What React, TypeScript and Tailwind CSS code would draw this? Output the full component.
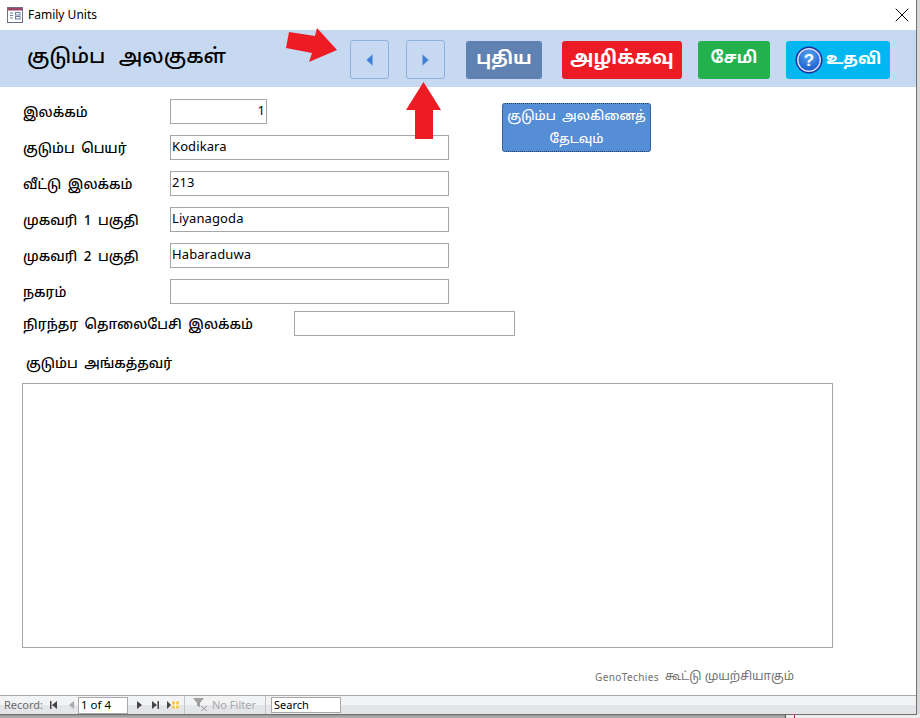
import { X } from "lucide-react";

const tamil = "font-['Noto_Sans_Tamil','Latha','Noto_Sans','DejaVu_Sans',sans-serif]";

// Access form icon in the title bar
function FormIcon() {
  return (
    <svg width="16" height="16" viewBox="0 0 16 16" className="shrink-0">
      <rect x="0.5" y="0.5" width="15" height="15" fill="#fff" stroke="#6d6d8e" />
      <rect x="1" y="1" width="14" height="2.5" fill="#a0456a" />
      <path d="M3 6h3M3 8.5h3M3 11h3" stroke="#6d7fa5" />
      <rect x="8.500" y="5.500" width="4.500" height="2.500" fill="#fff" stroke="#6d7fa5" />
      <rect x="8.500" y="9.500" width="4.500" height="2.500" fill="#fff" stroke="#6d7fa5" />
    </svg>
  );
}

function NavButton({ dir }: { dir: "prev" | "next" }) {
  return (
    <div className="flex h-[39px] w-[39px] items-center justify-center rounded-[3px] border border-[#8fb0dc] bg-[#c6d9f1]">
      <svg width="7" height="12" viewBox="0 0 7 12">
        <path d={dir === "prev" ? "M6.500 0.500V11.500L0.500 6Z" : "M0.500 0.500V11.500L6.500 6Z"} fill="#3f7fd6" stroke="#7ba7e0" strokeWidth="0.5" />
      </svg>
    </div>
  );
}

function RedArrowRight() {
  return (
    <svg width="54" height="36" viewBox="0 0 54 36" className="absolute left-[286px] top-[27px]">
      <path d="M3 5L29 9L31 1L51 23L23 35L26 26L0 21Z" fill="#ed1c24" />
    </svg>
  );
}

function RedArrowUp() {
  return (
    <svg width="36" height="58" viewBox="0 0 36 58" className="absolute left-[406px] top-[82px]">
      <path d="M17.500 0L35 28H27V57H9V28H0Z" fill="#ed1c24" />
    </svg>
  );
}

function Label({ width, children }: { width: string; children: React.ReactNode }) {
  return (
    <div className={`${width} pt-[5px] text-[13.500px] font-medium text-black [word-spacing:3px] ${tamil}`}>{children}</div>
  );
}

function Field({ label, value }: { label: string; value?: string }) {
  return (
    <div className="flex h-[25px] items-center">
      <Label width="w-[147px]">{label}</Label>
      <div className="h-[25px] w-[279px] border border-[#a6a6a6] bg-white px-px text-[13px] leading-[20px] tracking-[0.1px] text-black font-['Noto_Sans',sans-serif]">
        {value}
      </div>
    </div>
  );
}

function HeaderButton({ className, children }: { className: string; children: React.ReactNode }) {
  return (
    <div className={`flex h-[38px] items-center justify-center rounded-[3px] text-white font-bold ${tamil} ${className}`}>
      {children}
    </div>
  );
}

function HelpIcon() {
  return (
    <svg width="28" height="28" viewBox="0 0 28 28" className="shrink-0">
      <defs>
        <radialGradient id="helpFill" cx="50%" cy="30%" r="75%">
          <stop offset="0%" stopColor="#5aa8f5" />
          <stop offset="100%" stopColor="#1557c9" />
        </radialGradient>
      </defs>
      <circle cx="14" cy="14" r="13.500" fill="#1c2fa8" />
      <circle cx="14" cy="14" r="12" fill="#d5dcf5" />
      <circle cx="14" cy="14" r="10.500" fill="url(#helpFill)" />
      <text x="14" y="20" textAnchor="middle" fontSize="17" fontWeight="700" fill="#fff" fontFamily="Liberation Sans, sans-serif">?</text>
    </svg>
  );
}

function RecordNavBar() {
  return (
    <div className="flex h-[19px] items-center border-t border-[#a8a8a8] bg-[linear-gradient(#f2f3f5_50%,#e4e5e8_50%)] text-[11px] text-[#6b6b6b] font-['Noto_Sans',sans-serif]">
      <span className="ml-[4px] w-[41px]">Record:</span>
      <div className="flex w-[30px] items-center gap-[12px] pl-[5px] text-[#444]">
        <svg width="7" height="8" viewBox="0 0 7 8"><path d="M0 0h1.500v8H0zM7 0v8L2 4z" fill="#444" /></svg>
        <svg width="5" height="8" viewBox="0 0 5 8"><path d="M5 0v8L0 4z" fill="#aaa" /></svg>
      </div>
      <div className="ml-[3px] h-[17px] w-[50px] border border-[#a8a8a8] bg-white pl-[2px] text-[11.500px] leading-[14px] text-black">1 of 4</div>
      <div className="ml-[9px] flex items-center gap-[10px]">
        <svg width="5" height="8" viewBox="0 0 5 8"><path d="M0 0v8l5-4z" fill="#444" /></svg>
        <svg width="7" height="8" viewBox="0 0 7 8"><path d="M0 0v8l5-4zM5.500 0H7v8H5.500z" fill="#444" /></svg>
        <svg width="13" height="8" viewBox="0 0 13 8" className="-ml-[2px]">
          <path d="M0 0v8l4-4z" fill="#444" />
          <rect x="5" y="0.500" width="7" height="7" fill="#f2c94c" />
          <path d="M5 4h7M8.500.5v7" stroke="#fff" />
        </svg>
      </div>
      <div className="ml-[4px] h-full w-px bg-[#c4c4c4]" />
      <div className="flex w-[80px] items-center gap-[3px] pl-[8px] text-[#a8a8a8]">
        <svg width="16" height="14" viewBox="0 0 16 14" className="shrink-0">
          <path d="M0 0h11L7 5v4L4 8V5Z" fill="#a0a0a0" />
          <path d="M8 8l6 5M14 8l-6 5" stroke="#9a9a9a" />
        </svg>
        <span>No Filter</span>
      </div>
      <div className="h-full w-px bg-[#c4c4c4]" />
      <div className="ml-[5px] h-[16px] w-[70px] border border-[#a8a8a8] bg-white pl-[2px] text-[11px] leading-[14px] text-black">Search</div>
    </div>
  );
}

export default function App() {
  return (
    <div className="relative h-[718px] w-[920px] overflow-hidden bg-[#d8d8d8]">
      {/* what shows of the desktop under the window */}
      <div className="absolute bottom-0 left-0 h-[4px] w-[786px] bg-[linear-gradient(#8a8a8a,#b5b5b5)]" />
      <div className="absolute bottom-0 left-[786px] h-[4px] w-[134px] bg-[#ececec]" />
      <div className="absolute bottom-0 left-[785px] h-[4px] w-px bg-[#555]" />
      <div className="absolute bottom-0 left-[794px] h-[4px] w-px bg-[#a8324a]" />

      <div className="relative flex h-[715px] w-[917px] flex-col border-r border-b border-[#6f6f6f] bg-white">
        {/* title bar */}
        <div className="flex h-[30px] items-center pl-[7px] pr-[8px]">
          <FormIcon />
          <span className="ml-[5px] text-[12px] text-black font-['Noto_Sans',sans-serif]">Family Units</span>
          <X className="-mr-[6px] ml-auto h-[24px] w-[24px] text-black" strokeWidth={1} />
        </div>

        {/* form header */}
        <div className="flex h-[57px] items-center bg-[#c6d9f1] pt-[2px]">
          <h1 className={`ml-[27px] -mt-[3px] w-[323px] text-[20.500px] font-medium text-black [word-spacing:8px] ${tamil}`}>குடும்ப அலகுகள்</h1>
          <div className="flex items-center gap-[17px]">
            <NavButton dir="prev" />
            <NavButton dir="next" />
          </div>
          <HeaderButton className="ml-[21px] w-[76px] bg-[#5f82b3] text-[18px]">புதிய</HeaderButton>
          <HeaderButton className="ml-[20px] w-[120px] bg-[#ed1c24] text-[19px]">அழிக்கவு</HeaderButton>
          <HeaderButton className="ml-[16px] w-[72px] bg-[#22b14c] text-[16.500px]">சேமி</HeaderButton>
          <HeaderButton className="ml-[16px] w-[104px] gap-[3px] bg-[#00b7ef] text-[16px]">
            <HelpIcon />
            உதவி
          </HeaderButton>
        </div>

        {/* form body */}
        <div className="flex flex-1 flex-col pl-[23px]">
          <div className="mt-[12px] flex flex-col gap-[11px]">
            <div className="flex h-[25px] items-center">
              <Label width="w-[147px]">இலக்கம்</Label>
              <div className="h-[25px] w-[97px] border border-[#a6a6a6] bg-white px-px text-right text-[13px] leading-[20px] text-black font-['Noto_Sans',sans-serif]">1</div>
              <div className={`ml-[235px] mt-[4px] flex h-[49px] w-[149px] self-start items-center justify-center whitespace-nowrap rounded-[3px] border border-dotted border-[#1f3864] bg-[#558ed5] pt-[2px] text-center text-[12.700px] font-medium leading-[23px] text-white [word-spacing:3px] ${tamil}`}>
                <span>குடும்ப அலகினைத்<br />தேடவும்</span>
              </div>
            </div>
            <Field label="குடும்ப பெயர்" value="Kodikara" />
            <Field label="வீட்டு இலக்கம்" value="213" />
            <Field label="முகவரி 1 பகுதி" value="Liyanagoda" />
            <Field label="முகவரி 2 பகுதி" value="Habaraduwa" />
            <Field label="நகரம்" />
            <div className="-mt-[4px] flex h-[25px] items-center">
              <Label width="w-[271px]">நிரந்தர தொலைபேசி இலக்கம்</Label>
              <div className="h-[25px] w-[221px] border border-[#a6a6a6] bg-white" />
            </div>
          </div>

          <div className={`ml-[3px] mt-[19px] h-[20px] text-[13.500px] font-medium leading-[20px] text-black [word-spacing:3px] ${tamil}`}>குடும்ப அங்கத்தவர்</div>
          <div className="mt-[8px] h-[265px] w-[811px] -translate-x-px border border-[#a6a6a6] bg-white" />

          <div className="ml-[572px] mt-[20px] flex items-center gap-[6px] text-[#6f6f6f]">
            <span className="text-[10px] tracking-[0.4px] font-['Noto_Sans',sans-serif]">GenoTechies</span>
            <span className={`text-[12px] ${tamil}`}>கூட்டு முயற்சியாகும்</span>
          </div>
        </div>

        <RecordNavBar />
      </div>

      <RedArrowRight />
      <RedArrowUp />
    </div>
  );
}
